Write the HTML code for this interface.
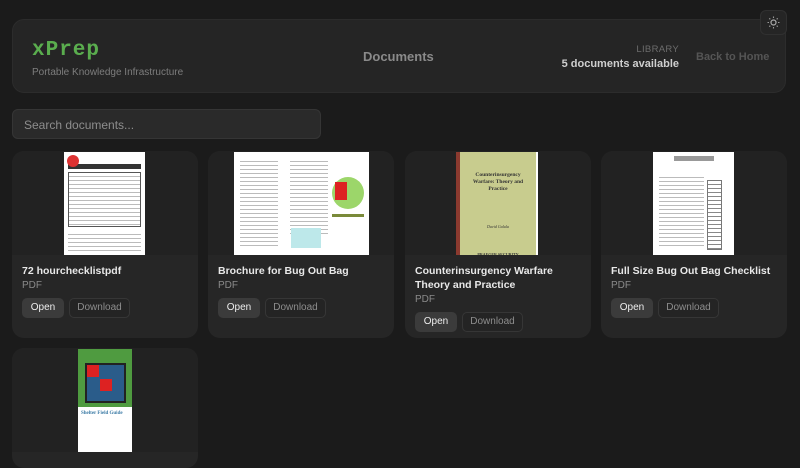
<!DOCTYPE html>
<html><head><meta charset="utf-8"><style>
*{box-sizing:border-box;margin:0;padding:0}
body{width:800px;height:457px;overflow:hidden;background:#1b1b1b;font-family:"Liberation Sans",sans-serif;position:relative}
.hdr{position:absolute;left:12px;top:19px;width:774px;height:74px;background:#252525;border-radius:12px;border:1px solid #2c2c2c}
.logo{position:absolute;left:19px;top:19px;color:#5aad4e;font:bold 21px "Liberation Mono",monospace;letter-spacing:1px}
.sub{position:absolute;left:19px;top:47px;color:#7d7d7d;font-size:10px}
.mid{position:absolute;left:350px;top:29px;color:#8a8a8a;font-weight:bold;font-size:13px}
.lib{position:absolute;right:106px;top:24px;text-align:right}
.lib .a{color:#6c6c6c;font-size:9.5px;letter-spacing:.3px}
.lib .b{color:#cfcfcf;font-size:11px;font-weight:bold;margin-top:3px}
.back{position:absolute;left:683px;top:31px;color:#555;font-weight:bold;font-size:11px}
.theme{position:absolute;left:760px;top:10px;width:27px;height:25px;background:#252525;border:1px solid #303030;border-radius:6px;z-index:2}
.search{position:absolute;left:12px;top:109px;width:309px;height:30px;background:#2a2a2a;border:1px solid #353535;border-radius:6px;color:#8d8d8d;font-size:12px;padding:8px 11px}
.card{position:absolute;width:186px;background:#262626;border-radius:12px;overflow:hidden}
.th{height:104px;background:#222;position:relative}
.th>div{position:absolute;top:1px;height:103px;background:#fff;overflow:hidden}
.t{color:#e8e8e8;font-weight:bold;font-size:10.5px;line-height:14px;padding:9px 10px 0}
.p{color:#8a8a8a;font-size:10px;padding:2px 10px 0}
.btns{padding:7px 10px 0;display:flex;gap:5px}
.o{background:#3b3b3b;color:#eee;font-size:10px;border-radius:5px;width:42px;height:20px;text-align:center;line-height:20px}
.d{border:1px solid #363636;background:#242424;color:#8d8d8d;font-size:10px;border-radius:5px;width:61px;height:20px;text-align:center;line-height:18px}
.lines{background-image:repeating-linear-gradient(#fff 0 3px,#bbb 3px 4px)!important;background-clip:content-box}
</style></head><body>
<div class="theme"><svg width="25" height="23" viewBox="0 0 25 23"><circle cx="12.5" cy="11.5" r="2.5" fill="none" stroke="#aaa" stroke-width="1.2"/><g stroke="#999" stroke-width="1.1"><path d="M12.5 5.5v1.5M12.5 16v1.5M6.5 11.5h1.5M17 11.5h1.5M8.3 7.3l1 1M15.7 14.7l1 1M8.3 15.7l1-1M15.7 8.3l1-1"/></g></svg></div>
<div class="hdr">
<div class="logo">xPrep</div>
<div class="sub">Portable Knowledge Infrastructure</div>
<div class="mid">Documents</div>
<div class="lib"><div class="a">LIBRARY</div><div class="b">5 documents available</div></div>
<div class="back">Back to Home</div>
</div>
<div class="search">Search documents...</div>

<div class="card" style="left:12px;top:151px;height:187px">
<div class="th"><div style="left:52px;width:81px;padding:12px 4px 4px;background:#fff"><div style="height:5px;background:#333;margin-bottom:3px"></div><div class="lines" style="height:55px;background:#ddd;border:1px solid #555"></div><div class="lines" style="height:20px;margin-top:4px"></div><div style="position:absolute;left:3px;top:3px;width:12px;height:12px;border-radius:50%;background:#d33"></div></div></div>
<div class="t">72 hourchecklistpdf</div><div class="p">PDF</div>
<div class="btns"><div class="o">Open</div><div class="d">Download</div></div></div>

<div class="card" style="left:208px;top:151px;height:187px">
<div class="th"><div style="left:26px;width:135px;padding:6px"><div class="lines" style="position:absolute;left:6px;top:6px;width:38px;height:90px"></div><div class="lines" style="position:absolute;left:56px;top:6px;width:38px;height:78px"></div><div style="position:absolute;left:57px;top:76px;width:30px;height:20px;background:#bde8ea"></div><div style="position:absolute;left:98px;top:25px;width:32px;height:32px;border-radius:50%;background:#9cd66a"></div><div style="position:absolute;left:101px;top:30px;width:12px;height:18px;background:#d22"></div><div style="position:absolute;left:98px;top:62px;width:32px;height:3px;background:#7a8a3a"></div></div></div>
<div class="t">Brochure for Bug Out Bag</div><div class="p">PDF</div>
<div class="btns"><div class="o">Open</div><div class="d">Download</div></div></div>

<div class="card" style="left:405px;top:151px;height:187px">
<div class="th"><div style="left:51px;width:82px;background:#c8cc8e;border-left:4px solid #8b3a2f;border-right:2px solid #fff;text-align:center;font:bold 5.5px/7px 'Liberation Serif',serif;color:#333;padding-top:20px">Counterinsurgency<br>Warfare: Theory and<br>Practice<div style="margin-top:30px;font-weight:normal;font-style:italic;font-size:4px">David Galula</div><div style="margin-top:22px;font-size:4px;line-height:5px">PRAEGER SECURITY<br>INTERNATIONAL</div></div></div>
<div class="t">Counterinsurgency Warfare<br>Theory and Practice</div><div class="p">PDF</div>
<div class="btns"><div class="o">Open</div><div class="d">Download</div></div></div>

<div class="card" style="left:601px;top:151px;height:187px">
<div class="th"><div style="left:52px;width:81px;padding:4px 6px"><div style="height:5px;width:40px;margin:0 auto 8px;background:#999"></div><div class="lines" style="position:absolute;left:6px;top:22px;width:45px;height:75px"></div><div style="position:absolute;left:54px;top:28px;width:15px;height:70px;background:repeating-linear-gradient(#fff 0 3px,#888 3px 4px);border:1px solid #777"></div></div></div>
<div class="t">Full Size Bug Out Bag Checklist</div><div class="p">PDF</div>
<div class="btns"><div class="o">Open</div><div class="d">Download</div></div></div>

<div class="card" style="left:12px;top:348px;height:120px">
<div class="th"><div style="left:66px;width:54px;background:#fff"><div style="height:58px;background:#4f9b40;position:relative"><div style="position:absolute;left:7px;top:14px;width:41px;height:40px;background:#2a5c8a;border:2px solid #222"></div><div style="position:absolute;left:9px;top:16px;width:12px;height:12px;background:#d22"></div><div style="position:absolute;left:22px;top:30px;width:12px;height:12px;background:#d22"></div></div><div style="color:#3a7aa5;font:bold 5px 'Liberation Serif',serif;padding:4px 3px">Shelter Field Guide</div></div></div>
</div>
</body></html>
